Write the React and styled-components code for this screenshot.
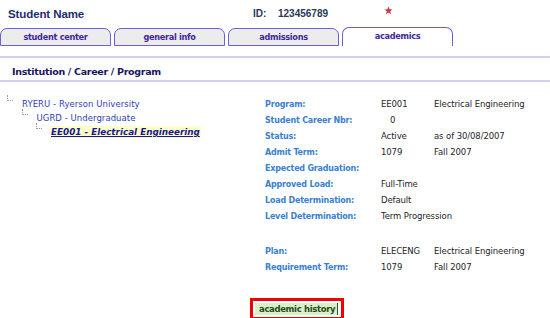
import React from 'react'
import styled, { createGlobalStyle } from 'styled-components';

const GlobalStyle = createGlobalStyle`
  body {
    margin: 0;
    background: #fff;
    font-family: "DejaVu Sans", Verdana, sans-serif;
  }
`;

const tabs = ['student center', 'general info', 'admissions', 'academics'];

const details = [
  { label: 'Program:', code: 'EE001', desc: 'Electrical Engineering' },
  { label: 'Student Career Nbr:', code: '0', indent: true },
  { label: 'Status:', code: 'Active', desc: 'as of 30/08/2007' },
  { label: 'Admit Term:', code: '1079', desc: 'Fall 2007' },
  { label: 'Expected Graduation:' },
  { label: 'Approved Load:', code: 'Full-Time' },
  { label: 'Load Determination:', code: 'Default' },
  { label: 'Level Determination:', code: 'Term Progression' },
  { spacer: true },
  { label: 'Plan:', code: 'ELECENG', desc: 'Electrical Engineering' },
  { label: 'Requirement Term:', code: '1079', desc: 'Fall 2007' },
];

class App extends React.Component {
  render() {
    return (
      <Page>
        <GlobalStyle />
        <TopBar>
          <StudentName>Student Name</StudentName>
          <IdLabel>ID:</IdLabel>
          <IdValue>123456789</IdValue>
          <Star viewBox="0 0 10 10">
            <polygon points="5,0.5 6.2,3.7 9.6,3.8 6.9,5.9 7.9,9.3 5,7.3 2.1,9.3 3.1,5.9 0.4,3.8 3.8,3.7" fill="#c8394a" />
          </Star>
        </TopBar>
        <TabBar>
          {tabs.map((t) => (
            <Tab key={t} active={t === 'academics'}>{t}</Tab>
          ))}
        </TabBar>
        <SectionHeader>Institution / Career / Program</SectionHeader>
        <Content>
          <Tree>
            <TreeRow level={0}>
              <Connector />
              <NodeLink>RYERU - Ryerson University</NodeLink>
            </TreeRow>
            <TreeRow level={1}>
              <Connector />
              <NodeLink>UGRD - Undergraduate</NodeLink>
            </TreeRow>
            <TreeRow level={2}>
              <Connector />
              <CurrentNode>EE001 - Electrical Engineering</CurrentNode>
            </TreeRow>
          </Tree>
          <Details>
            {details.map((d, i) =>
              d.spacer ? (
                <Spacer key={i} />
              ) : (
                <React.Fragment key={i}>
                  <Label>{d.label}</Label>
                  <Value indent={d.indent}>{d.code || ''}</Value>
                  <Value>{d.desc || ''}</Value>
                </React.Fragment>
              )
            )}
          </Details>
        </Content>
        <Footer>
          <HistoryFrame>
            <HistoryButton>academic history</HistoryButton>
          </HistoryFrame>
        </Footer>
      </Page>
    )
  }
}

export default App;

const Page = styled.div`
  width: 550px;
  height: 318px;
  overflow: hidden;
  background: #fff;
`;

const TopBar = styled.div`
  display: grid;
  grid-template-columns: 245px 25px 106px auto;
  align-items: center;
  height: 27px;
  padding-left: 8px;
`;

const StudentName = styled.div`
  font-family: "Liberation Sans", Arial, sans-serif;
  font-weight: bold;
  font-size: 11.5px;
  letter-spacing: -0.1px;
  color: #1f2d70;
  margin-top: 1px;
`;

const IdLabel = styled.div`
  font-family: "Liberation Sans", Arial, sans-serif;
  font-weight: bold;
  font-size: 10px;
  color: #2a3858;
`;

const IdValue = styled(IdLabel)``;

const Star = styled.svg`
  width: 9px;
  height: 9px;
  margin-top: -6px;
`;

const TabBar = styled.div`
  display: flex;
  gap: 3px;
  height: 19px;
  align-items: flex-end;
`;

const Tab = styled.div`
  box-sizing: border-box;
  width: 111px;
  height: ${(p) => (p.active ? '19px' : '18px')};
  border: 1px solid #6d60d6;
  border-bottom: ${(p) => (p.active ? 'none' : '1px solid #6d60d6')};
  border-radius: 7px 7px 0 0;
  background: ${(p) => (p.active ? '#fff' : '#ececec')};
  color: #45279c;
  font-family: "DejaVu Sans", Verdana, sans-serif;
  font-weight: bold;
  font-size: 8.2px;
  letter-spacing: -0.3px;
  display: flex;
  align-items: center;
  justify-content: center;
  padding-bottom: ${(p) => (p.active ? '2px' : '0')};
`;

const SectionHeader = styled.div`
  box-sizing: border-box;
  margin-top: 10px;
  height: 26px;
  padding: 5px 0 0 12px;
  line-height: 17px;
  border-top: 2px solid #d3cef3;
  border-bottom: 2px solid #d3cef3;
  font-weight: bold;
  font-size: 9.5px;
  letter-spacing: -0.3px;
  color: #16165a;
`;

const Content = styled.div`
  display: flex;
  padding-top: 14px;
`;

const Tree = styled.div`
  width: 258px;
  padding-left: 7px;
  padding-top: 1px;
`;

const TreeRow = styled.div`
  display: flex;
  align-items: center;
  height: 14px;
  margin-left: ${(p) => p.level * 14.5}px;
`;

const Connector = styled.span`
  box-sizing: border-box;
  width: 6px;
  height: 6px;
  margin-right: 9px;
  align-self: flex-start;
  margin-top: -2px;
  border-left: 1px dotted #9a9ab0;
  border-bottom: 1px dotted #9a9ab0;
`;

const NodeLink = styled.span`
  font-size: 8.5px;
  letter-spacing: 0.05px;
  color: #2f3fb0;
  white-space: nowrap;
`;

const CurrentNode = styled.span`
  font-size: 8.8px;
  font-weight: bold;
  font-style: italic;
  text-decoration: underline;
  color: #17179a;
  background: #ffffc8;
  padding: 1px 1px 1px 0;
  white-space: nowrap;
`;

const Details = styled.div`
  display: grid;
  grid-template-columns: 116px 53px auto;
  grid-auto-rows: minmax(16px, auto);
  align-items: center;
`;

const Label = styled.div`
  font-size: 8px;
  font-weight: bold;
  letter-spacing: -0.2px;
  color: #3a7fd0;
  white-space: nowrap;
`;

const Value = styled.div`
  font-size: 8.5px;
  letter-spacing: -0.1px;
  color: #1e1e2a;
  white-space: nowrap;
  padding-left: ${(p) => (p.indent ? '9px' : '0')};
`;

const Spacer = styled.div`
  grid-column: 1 / -1;
  height: 19px;
`;

const Footer = styled.div`
  padding-left: 250px;
  margin-top: 22px;
`;

const HistoryFrame = styled.div`
  display: inline-block;
  border: 3px solid #f00000;
  padding: 2px 3px 2px 2px;
`;

const HistoryButton = styled.div`
  background: #d8efc8;
  border-right: 1px solid #2d5a1a;
  color: #2a4a18;
  font-size: 8.5px;
  font-weight: bold;
  letter-spacing: -0.35px;
  line-height: 12px;
  padding: 0 2px 0 4px;
`;
